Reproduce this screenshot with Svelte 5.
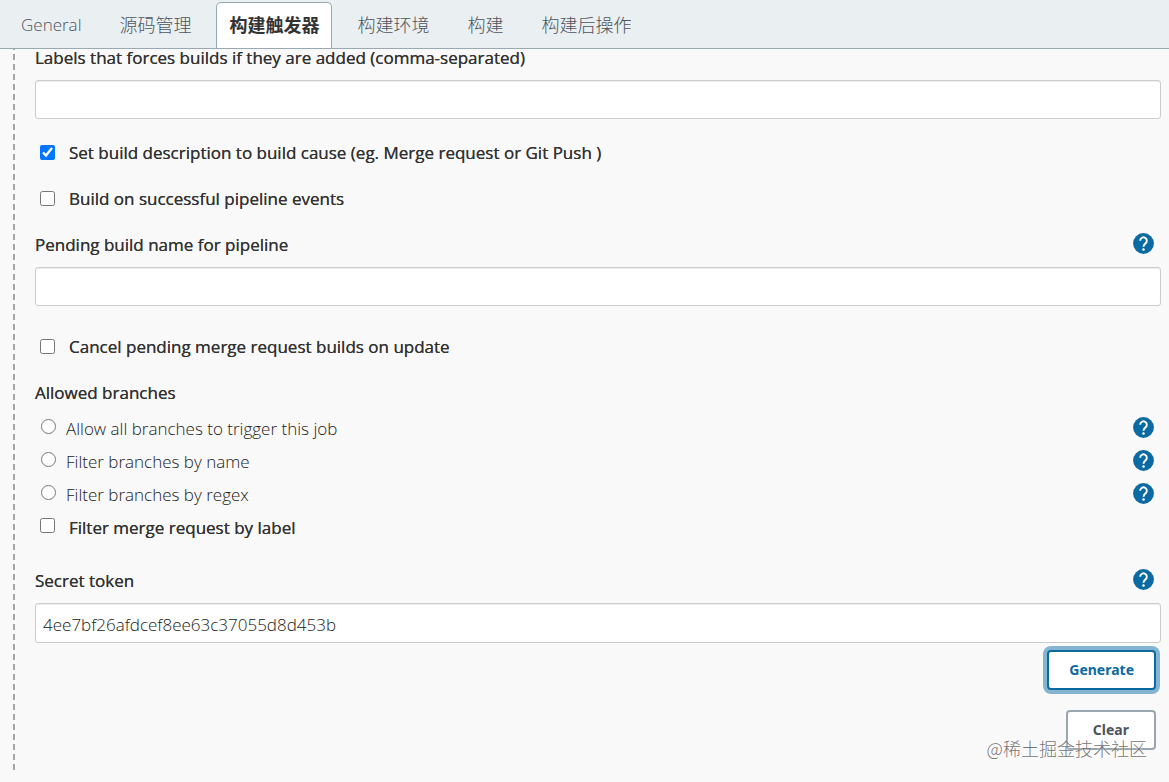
<script>
  const tabs = ['General', '源码管理', '构建触发器', '构建环境', '构建', '构建后操作'];
  let active = $state(2);
  let labels = $state('');
  let pendingName = $state('');
  let token = $state('4ee7bf26afdcef8ee63c37055d8d453b');
  let branchFilter = $state('');
  const branchOptions = [
    { value: 'all', text: 'Allow all branches to trigger this job' },
    { value: 'name', text: 'Filter branches by name' },
    { value: 'regex', text: 'Filter branches by regex' }
  ];
</script>

{#snippet help(topic)}
  <button type="button" class="help" aria-label={'Help for ' + topic}>
    <svg viewBox="0 0 24 24" aria-hidden="true">
      <circle cx="12" cy="12" r="10" fill="#0b6aa2" />
      <path d="M8.800 9.300a3.200 3.200 0 1 1 5.500 2.200c-1.200 1.200-2.300 1.700-2.300 3.500" fill="none" stroke="#fff" stroke-width="1.800" />
      <circle cx="12" cy="17.800" r="1.200" fill="#fff" />
    </svg>
  </button>
{/snippet}

<div class="page">
  <nav>
    {#each tabs as tab, i}
      <button type="button" class="tab" class:latin={i === 0} class:active={active === i} onclick={() => (active = i)}>{tab}</button>
    {/each}
  </nav>

  <form class="config" onsubmit={(e) => e.preventDefault()}>
    <div class="fields">
      <div class="field">
        <label class="row strong" for="labels">Labels that forces builds if they are added (comma-separated)</label>
        <input id="labels" class="text" type="text" bind:value={labels} />
      </div>

      <div class="checks first">
        <label class="row check strong"><input type="checkbox" checked />Set build description to build cause (eg. Merge request or Git Push )</label>
        <label class="row check strong"><input type="checkbox" />Build on successful pipeline events</label>
      </div>

      <div class="field pending">
        <div class="row">
          <label class="strong" for="pending">Pending build name for pipeline</label>
          {@render help('Pending build name for pipeline')}
        </div>
        <input id="pending" class="text" type="text" bind:value={pendingName} />
      </div>

      <div class="checks second">
        <label class="row check strong"><input type="checkbox" />Cancel pending merge request builds on update</label>
      </div>

      <fieldset>
        <legend class="row strong">Allowed branches</legend>
        {#each branchOptions as option}
          <div class="row">
            <label class="radio"><input type="radio" name="branches" value={option.value} bind:group={branchFilter} />{option.text}</label>
            {@render help(option.text)}
          </div>
        {/each}
        <label class="row check raised strong"><input type="checkbox" />Filter merge request by label</label>
      </fieldset>

      <div class="field secret">
        <div class="row">
          <label class="strong" for="token">Secret token</label>
          {@render help('Secret token')}
        </div>
        <input id="token" class="text" type="text" bind:value={token} />
      </div>

      <div class="actions">
        <button type="button" class="btn primary">Generate</button>
        <button type="button" class="btn" onclick={() => (token = '')}>Clear</button>
      </div>
    </div>
  </form>
  <span class="watermark">@稀土掘金技术社区</span>
</div>

<style>
  :global(body) {
    margin: 0;
    background: #f9f9f9;
  }
  .page {
    position: relative;
    box-sizing: border-box;
    min-height: 100vh;
    color: #333;
    font: 17px/18px 'Open Sans', 'Noto Sans CJK SC', sans-serif;
  }
  nav {
    display: flex;
    gap: 12px;
    padding: 2px 8px 0;
    background: #eaeff2;
    border-bottom: 1px solid #98a9b3;
  }
  .tab {
    height: 46px;
    padding: 0 12px 2px;
    border: 1px solid transparent;
    border-bottom: 0;
    border-radius: 5px 5px 0 0;
    background: none;
    color: #4d545d;
    font: 300 18px/42px 'Open Sans', 'Noto Sans CJK SC', sans-serif;
    cursor: pointer;
  }
  .tab.latin {
    font-size: 17px;
  }
  .tab.active {
    border-color: #98a9b3;
    background: #fff;
    color: #333;
    font-weight: 700;
  }
  .config {
    padding: 0 8px 12px 13px;
  }
  .fields {
    padding: 0 0 20px 22px;
    background: repeating-linear-gradient(#a6a6a6 0 1px, transparent 1px 5px, #a6a6a6 5px 10px) left top / 2px 100% no-repeat;
  }
  .row {
    display: flex;
    align-items: center;
    justify-content: space-between;
    height: 18px;
    white-space: nowrap;
  }
  .strong {
    font-weight: 500;
    text-shadow: 0 0 0 #333;
  }
  .text {
    display: block;
    box-sizing: border-box;
    width: 100%;
    height: 39px;
    margin-top: 13px;
    padding: 2px 7px 0;
    border: 1px solid #ccc;
    border-radius: 3px;
    background: #fff;
    box-shadow: inset 0 1px 1px rgba(0, 0, 0, 0.075);
    color: #222;
    font: inherit;
    font-weight: 300;
  }
  .checks {
    display: grid;
    gap: 28px;
  }
  .first {
    margin-top: 25px;
  }
  .second {
    margin: 32px 0 28px;
  }
  .pending {
    margin-top: 28px;
  }
  .check {
    justify-content: flex-start;
    gap: 14px;
    padding-left: 5px;
  }
  .check input,
  .radio input {
    width: 15px;
    height: 15px;
    margin: 0 0 2px;
    accent-color: #0075ff;
  }
  fieldset {
    display: grid;
    gap: 15px;
    min-width: 0;
    margin: 0;
    padding: 0;
    border: 0;
  }
  legend {
    padding: 0;
    margin-bottom: 18px;
  }
  .radio {
    display: flex;
    align-items: center;
    gap: 10px;
    padding-left: 6px;
    color: #222;
    font-weight: 300;
  }
  .radio input,
  .raised input {
    margin-bottom: 6px;
  }
  .help {
    display: flex;
    margin: -4px 5px 0 0;
    padding: 0;
    border: 0;
    background: none;
    cursor: pointer;
  }
  .help svg {
    width: 25px;
    height: 25px;
  }
  .secret {
    margin-top: 35px;
  }
  .secret .text {
    height: 40px;
  }
  .actions {
    display: flex;
    flex-direction: column;
    align-items: flex-end;
    gap: 20px;
    padding: 7px 5px 0 0;
  }
  .btn {
    height: 40px;
    padding: 0 25px;
    border: 2px solid #98a6b0;
    border-radius: 4px;
    background: #fff;
    color: #4d545d;
    font: 700 14px/18px 'Noto Sans', sans-serif;
    cursor: pointer;
  }
  .primary {
    padding: 0 20px;
    border-color: #0b6aa2;
    box-shadow: 0 0 0 4px #85b4d0;
    color: #0b6aa2;
  }
  .watermark {
    position: absolute;
    top: 736px;
    right: 22px;
    color: rgba(90, 90, 90, 0.85);
    font: 300 18px/24px 'Noto Sans CJK SC', sans-serif;
    text-shadow: 0 0 2px #fff;
    pointer-events: none;
  }
</style>
